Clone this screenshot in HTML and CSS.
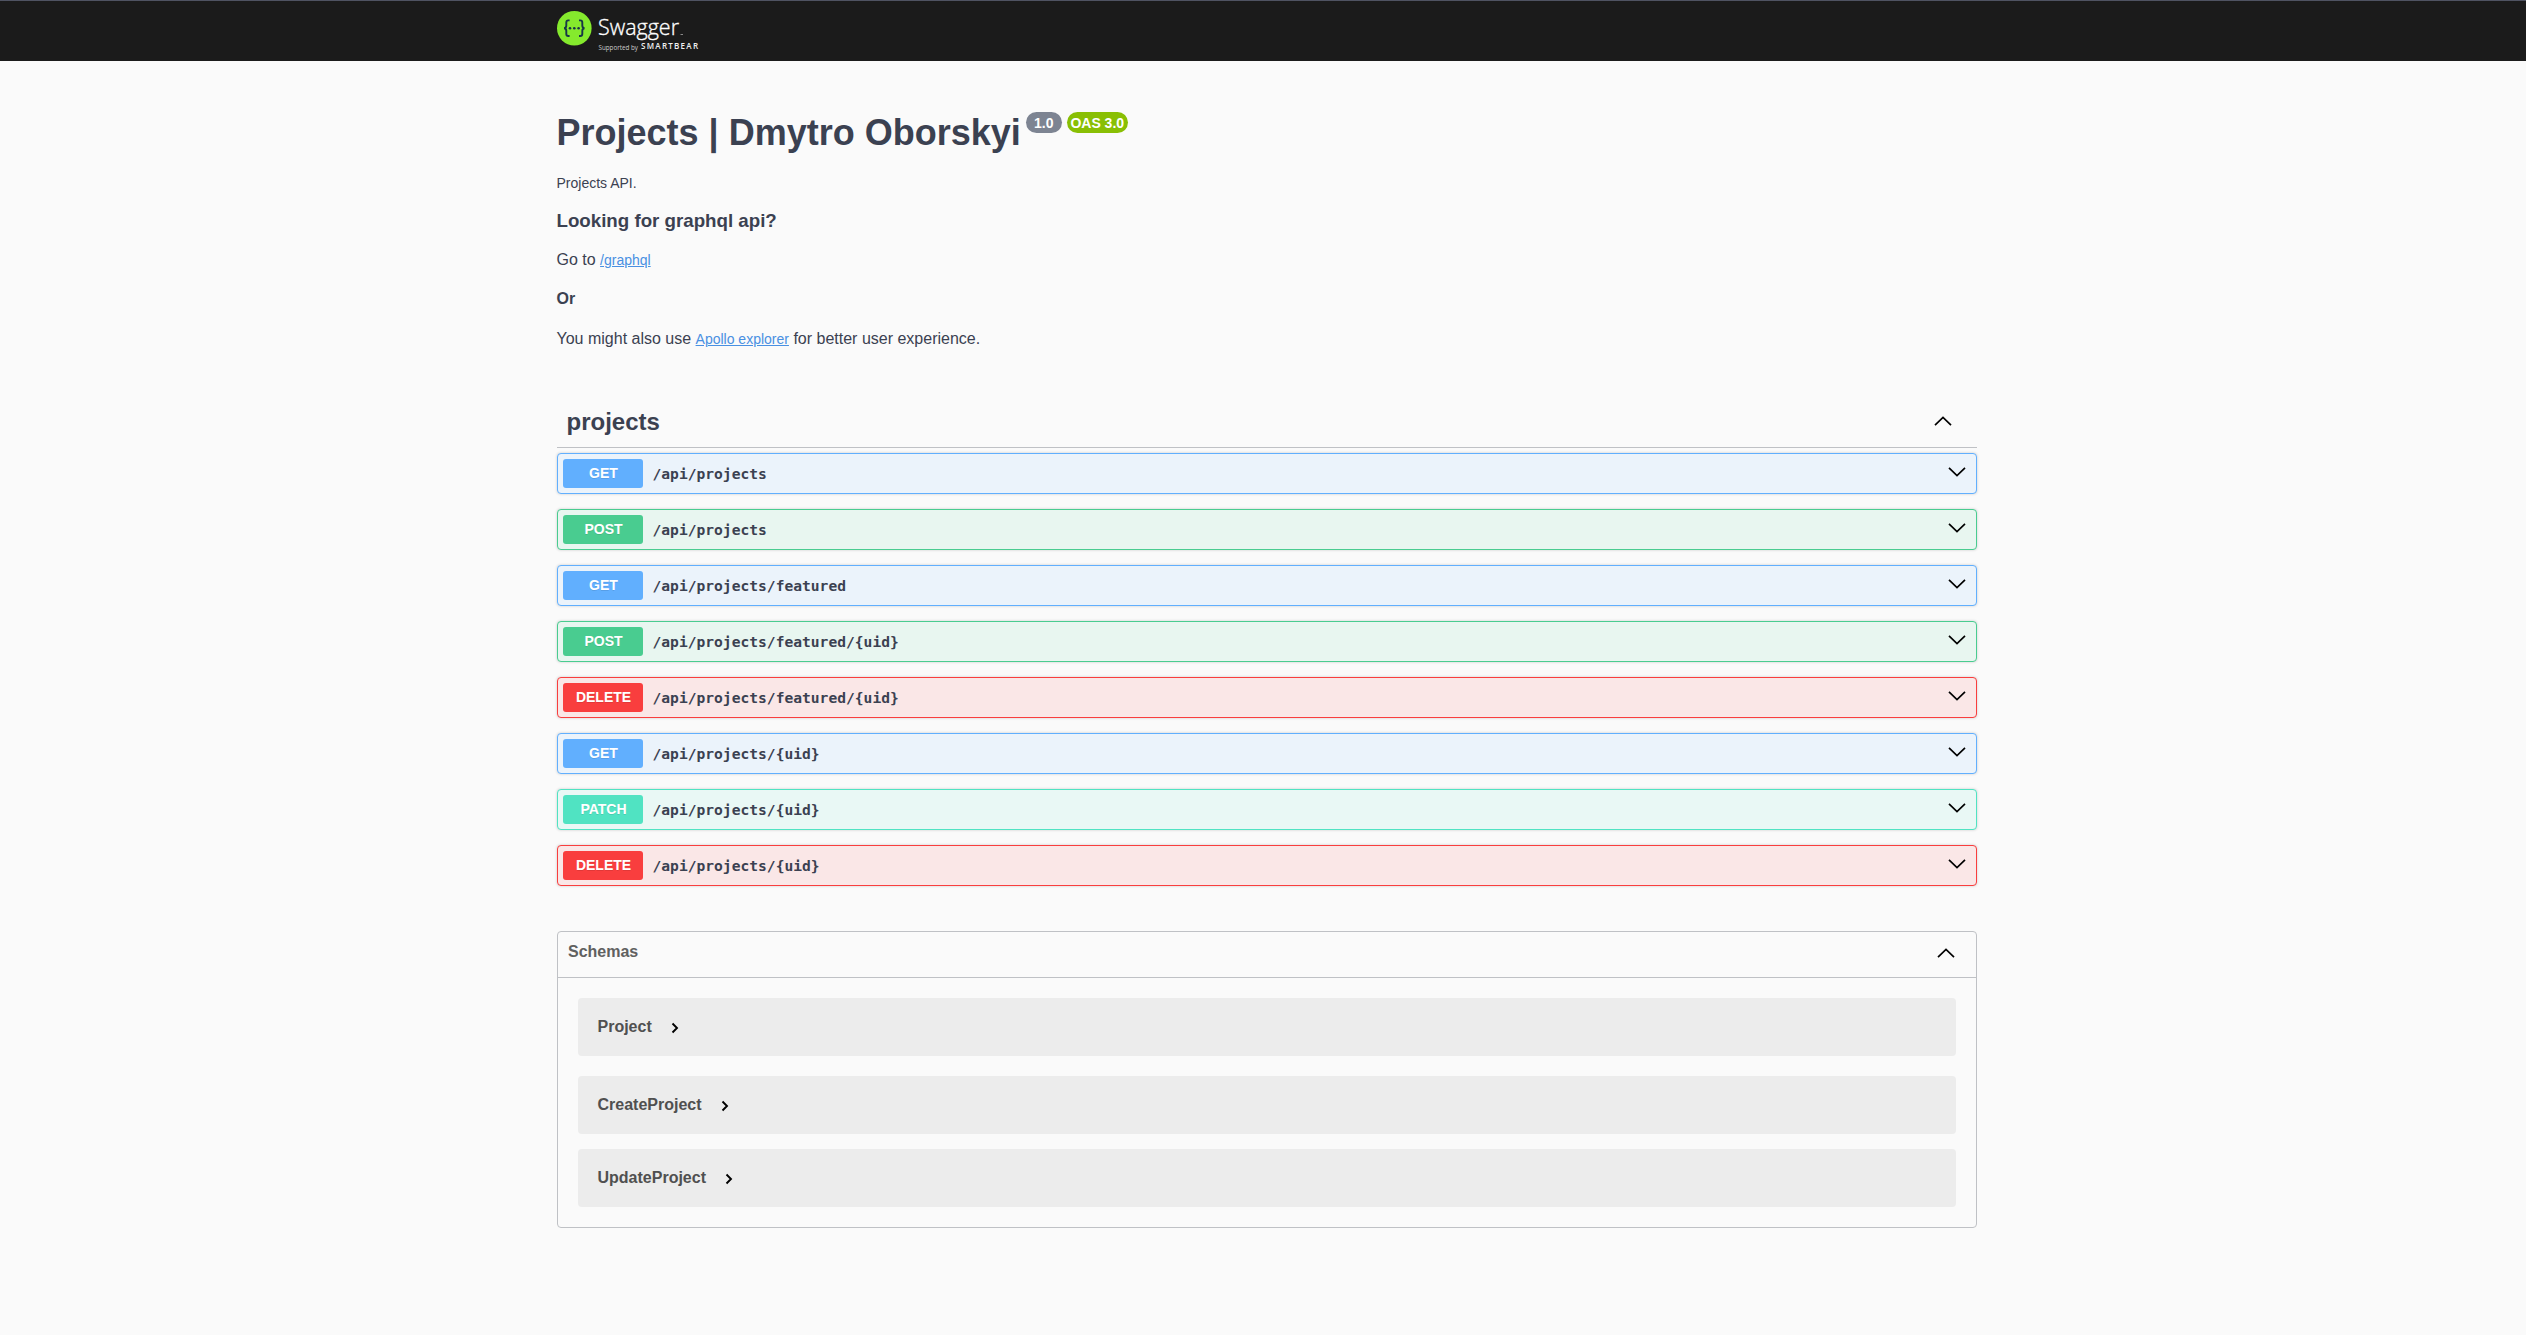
FILE: index.html
```html
<!DOCTYPE html>
<html lang="en">
<head>
<meta charset="utf-8">
<title>Swagger UI</title>
<link rel="stylesheet" href="styles.css">
</head>
<body>
<svg class="defs" width="0" height="0" aria-hidden="true">
  <symbol id="down" viewBox="0 0 18 10"><path d="M1 .8 9 8.6 17 .8"/></symbol>
  <symbol id="up" viewBox="0 0 18 10"><path d="M1 9.2 9 1.4 17 9.2"/></symbol>
  <symbol id="right" viewBox="0 0 8 12"><path d="M1.5 1.5 6 6 1.5 10.5"/></symbol>
</svg>
<header class="topbar">
  <div class="wrapper">
    <svg class="logo" width="144" height="44" viewBox="0 0 144 44" role="img" aria-label="Swagger">
      <circle cx="17.3" cy="18.2" r="17.3" fill="#85ea2d"/>
      <g fill="none" stroke="#173647" stroke-width="1.9">
        <path d="M12.6 10.4h-1.3q-2 0-2 2v3.2q0 2.6-2.3 2.6 2.3 0 2.3 2.6V24q0 2 2 2h1.3"/>
        <path d="M22 10.4h1.3q2 0 2 2v3.2q0 2.6 2.3 2.6-2.3 0-2.3 2.6V24q0 2-2 2H22"/>
      </g>
      <g fill="#173647"><circle cx="13" cy="18.2" r="1.3"/><circle cx="17.3" cy="18.2" r="1.3"/><circle cx="21.6" cy="18.2" r="1.3"/></g>
      <text class="logo-name" x="41" y="25" textLength="81" lengthAdjust="spacingAndGlyphs">Swagger</text>
      <path d="M123.5 24.5h2.5" stroke="#888" stroke-width="1"/>
      <text class="logo-by" x="41.5" y="40" textLength="39.5" lengthAdjust="spacingAndGlyphs">Supported by</text>
      <text class="logo-brand" x="84" y="39" textLength="57">SMARTBEAR</text>
    </svg>
  </div>
</header>
<main class="wrapper">
  <section class="info">
    <h1>Projects | Dmytro Oborskyi<span class="badges"><span class="badge">1.0</span><span class="badge oas">OAS 3.0</span></span></h1>
    <p class="intro">Projects API.</p>
    <h3>Looking for graphql api?</h3>
    <p class="go">Go to <a href="#">/graphql</a></p>
    <h4>Or</h4>
    <p>You might also use <a href="#">Apollo explorer</a> for better user experience.</p>
  </section>
  <section class="operations">
    <h2 class="tag">projects<svg><use href="#up"/></svg></h2>
    <div class="op get"><span class="method">GET</span><span class="path">/api/projects</span><svg><use href="#down"/></svg></div>
    <div class="op post"><span class="method">POST</span><span class="path">/api/projects</span><svg><use href="#down"/></svg></div>
    <div class="op get"><span class="method">GET</span><span class="path">/api/projects/featured</span><svg><use href="#down"/></svg></div>
    <div class="op post"><span class="method">POST</span><span class="path">/api/projects/featured/{uid}</span><svg><use href="#down"/></svg></div>
    <div class="op delete"><span class="method">DELETE</span><span class="path">/api/projects/featured/{uid}</span><svg><use href="#down"/></svg></div>
    <div class="op get"><span class="method">GET</span><span class="path">/api/projects/{uid}</span><svg><use href="#down"/></svg></div>
    <div class="op patch"><span class="method">PATCH</span><span class="path">/api/projects/{uid}</span><svg><use href="#down"/></svg></div>
    <div class="op delete"><span class="method">DELETE</span><span class="path">/api/projects/{uid}</span><svg><use href="#down"/></svg></div>
  </section>
  <section class="models">
    <h4>Schemas<svg><use href="#up"/></svg></h4>
    <div class="model first">Project<svg><use href="#right"/></svg></div>
    <div class="model">CreateProject<svg><use href="#right"/></svg></div>
    <div class="model">UpdateProject<svg><use href="#right"/></svg></div>
  </section>
</main>
</body>
</html>
```
FILE: styles.css
```css
* { box-sizing: border-box; }
body {
  margin: 0;
  background: #fafafa;
  color: #3b4151;
  font-family: "Liberation Sans", Arial, sans-serif;
  font-size: 16px;
  line-height: 19px;
}
h1, h2, h3, h4, p { margin: 0; }
.defs { display: none; }
svg { fill: none; stroke: #000; stroke-width: 1.7; }
.wrapper { width: 1420px; margin-left: 557px; }

.topbar {
  height: 61px;
  padding-top: 10px;
  background: #1b1b1b;
  border-top: 1px solid #4f5362;
}
.logo { display: block; margin-top: -1px; stroke: none; }
.logo text { font-family: "Open Sans", sans-serif; fill: #fff; }
.logo .logo-name { font-size: 22.5px; font-weight: 300; stroke: #fff; stroke-width: .35px; }
.logo .logo-by { font-size: 7px; fill: #ccc; }
.logo .logo-brand { font-size: 8px; font-weight: 600; fill: #f0f0f0; }

.info { padding-top: 51px; height: 335px; margin-left: -.5px; }
.info h1 { display: flex; font-size: 36px; line-height: 41px; }
.badges { display: flex; gap: 5px; margin-left: 5px; }
.badge {
  width: 36px;
  height: 21px;
  border-radius: 11px;
  background: #7d8492;
  color: #fff;
  font-size: 14px;
  line-height: 22px;
  text-align: center;
}
.badge.oas { width: 61px; background: #89bf04; }
.intro { margin-top: 22px; font-size: 14px; line-height: 16px; }
.info h3 { margin-top: 19px; font-size: 18.72px; line-height: 22px; }
.go { margin-top: 18px; }
.info h4 { margin: 19px 0 21px; }
.info a { font-size: 14px; color: #4990e2; }

.tag {
  display: flex;
  justify-content: space-between;
  height: 52px;
  padding: 12px 25px 0 9.5px;
  margin-bottom: 5px;
  border-bottom: 1px solid #bfc1c5;
  font-size: 24px;
  line-height: 28px;
}
.tag svg, .op svg, .models h4 svg { width: 18px; height: 10px; }
.tag svg { margin-top: 7.5px; }
.op {
  display: flex;
  height: 41px;
  padding: 5px;
  margin-bottom: 15px;
  border: 1px solid var(--c);
  border-radius: 4px;
  background: var(--bg);
  box-shadow: 0 0 3px rgba(0, 0, 0, .19);
}
.get { --c: #61affe; --bg: #ebf3fb; }
.post { --c: #49cc90; --bg: #e8f6f0; }
.delete { --c: #f93e3e; --bg: #fae7e7; }
.patch { --c: #50e3c2; --bg: #e9f8f5; }
.method {
  width: 80px;
  height: 29px;
  padding-left: 1px;
  border-radius: 3px;
  background: var(--c);
  color: #fff;
  font-size: 14px;
  font-weight: 700;
  line-height: 28px;
  text-align: center;
  text-shadow: 0 1px 0 rgba(0, 0, 0, .1);
}
.path {
  flex: 1;
  padding-left: 9.5px;
  font: 700 14.62px/29px "DejaVu Sans Mono", monospace;
}
.op svg { margin: 8px 5px 0 0; }

.models {
  height: 297px;
  margin-top: 45px;
  border: 1px solid #bfc1c5;
  border-radius: 4px;
}
.models h4 {
  display: flex;
  justify-content: space-between;
  height: 46px;
  padding: 10px 21px 0 10px;
  border-bottom: 1px solid #bfc1c5;
  color: #606060;
}
.models h4 svg { margin-top: 5.5px; }
.model {
  display: flex;
  height: 58px;
  margin: 0 20px 15px;
  padding: 19px 19.5px;
  border-radius: 4px;
  background: #ececec;
  color: #505050;
  font-weight: 700;
}
.model.first { margin: 20px 20px; }
.model svg { width: 8px; height: 12px; margin: 5px 0 0 19.5px; stroke-width: 1.9; }
```
